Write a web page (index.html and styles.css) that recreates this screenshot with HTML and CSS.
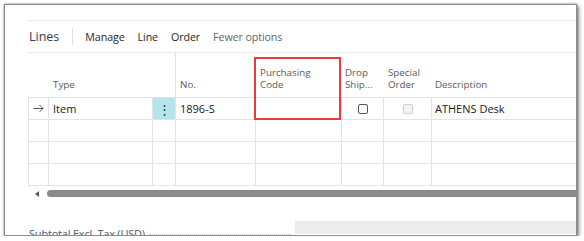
FILE: index.html
```html
<!DOCTYPE html>
<html>
<head>
<meta charset="utf-8">
<link rel="stylesheet" href="styles.css">
</head>
<body>
<div class="frame">
  <div class="toolbar">
    <span class="title">Lines</span>
    <span class="sep"></span>
    <span class="action">Manage</span>
    <span class="action">Line</span>
    <span class="action">Order</span>
    <span class="action muted">Fewer options</span>
  </div>
  <div class="grid">
    <div class="row head">
      <div class="c c1"></div>
      <div class="c c2"><span>Type</span></div>
      <div class="c c3"></div>
      <div class="c c4"><span>No.</span></div>
      <div class="c c5"><span>Purchasing<br>Code</span></div>
      <div class="c c6"><span>Drop<br>Ship...</span></div>
      <div class="c c7"><span>Special<br>Order</span></div>
      <div class="c c8"><span>Description</span></div>
    </div>
    <div class="row body">
      <div class="c c1 arrow"><svg width="11" height="9" viewBox="0 0 11 9"><path d="M0.5 4.5H10M6.5 1L10 4.5L6.5 8" fill="none" stroke="#555" stroke-width="1"/></svg></div>
      <div class="c c2">Item</div>
      <div class="c c3 sel">⋮</div>
      <div class="c c4">1896-S</div>
      <div class="c c5"></div>
      <div class="c c6 center"><span class="cb"></span></div>
      <div class="c c7 center"><span class="cb off"></span></div>
      <div class="c c8">ATHENS Desk</div>
    </div>
    <div class="row body">
      <div class="c c1"></div><div class="c c2"></div><div class="c c3"></div><div class="c c4"></div>
      <div class="c c5"></div><div class="c c6"></div><div class="c c7"></div><div class="c c8"></div>
    </div>
    <div class="row body">
      <div class="c c1"></div><div class="c c2"></div><div class="c c3"></div><div class="c c4"></div>
      <div class="c c5"></div><div class="c c6"></div><div class="c c7"></div><div class="c c8"></div>
    </div>
    <div class="row body">
      <div class="c c1"></div><div class="c c2"></div><div class="c c3"></div><div class="c c4"></div>
      <div class="c c5"></div><div class="c c6"></div><div class="c c7"></div><div class="c c8"></div>
    </div>
  </div>
  <div class="scroll">
    <span class="tri"></span>
    <span class="thumb"></span>
  </div>
  <div class="totals">
    <span class="label">Subtotal Excl. Tax (USD)</span>
    <span class="dots"></span>
    <span class="value"></span>
  </div>
  <div class="highlight"></div>
</div>
</body>
</html>
```

FILE: styles.css
```css
html, body {
  margin: 0;
  padding: 0;
  background: #ffffff;
}
body {
  font-family: "Open Sans", "Noto Sans", sans-serif;
  color: #212121;
}
.frame {
  position: relative;
  box-sizing: border-box;
  margin: 4px 0 0 4px;
  width: 573px;
  height: 232px;
  border: 1px solid #8d8d8d;
  box-shadow: 0 0 2px rgba(0,0,0,0.45), 2px 2px 4px rgba(0,0,0,0.45);
  background: #fff;
  overflow: hidden;
  padding: 15px 0 0 23px;
}
.toolbar {
  display: flex;
  align-items: center;
  height: 31px;
  border-top: 1px solid #e8e8e8;
  border-bottom: 1px solid #e8e8e8;
}
.title {
  font-size: 12.5px;
  color: #323e4f;
  margin-left: 1px;
}
.sep {
  width: 1px;
  height: 17px;
  background: #e0e0e0;
  margin: 0 12px 0 13px;
}
.action {
  font-size: 10.7px;
  letter-spacing: -0.1px;
  color: #262626;
  margin-right: 13px;
}
.muted {
  color: #5f6670;
}
.grid {
  width: 560px;
}
.row {
  display: flex;
}
.row.head {
  height: 45px;
  border-bottom: 1px solid #e3e3e3;
  box-sizing: border-box;
}
.row.body {
  height: 22px;
  border-left: 1px solid #e3e3e3;
  box-sizing: border-box;
}
.c {
  box-sizing: border-box;
  flex: none;
  font-size: 11px;
  display: flex;
  align-items: center;
  overflow: hidden;
  white-space: nowrap;
}
.body .c {
  border-right: 1px solid #e3e3e3;
  border-bottom: 1px solid #e3e3e3;
}
.head .c {
  align-items: flex-end;
  font-size: 9.8px;
  color: #5a5a5a;
  line-height: 12px;
  padding-bottom: 6px;
}
.head .c1 { width: 21px; }
.body .c1 { width: 20px; }
.c2 { width: 104px; padding-left: 4px; }
.c3 { width: 23px; }
.head .c3 { border-right: 1px solid #e3e3e3; }
.c4 { width: 80px; padding-left: 4px; }
.c5 { width: 86px; padding-left: 4px; }
.c6 { width: 42px; padding-left: 3px; }
.c7 { width: 48px; padding-left: 4px; }
.c8 { flex: 1 1 auto; padding-left: 3px; }
.arrow {
  justify-content: center;
}
.sel {
  background: #b4e5ea;
  justify-content: center;
  font-size: 13px;
  color: #333;
}
.center {
  justify-content: center;
}
.body .c6.center, .body .c7.center { padding-left: 0; }
.cb {
  width: 10px;
  height: 10px;
  box-sizing: border-box;
  border: 1px solid #555;
  border-radius: 2px;
  background: #fff;
}
.cb.off {
  border-color: #cfcfcf;
  background: #f4f4f4;
}
.scroll {
  display: flex;
  align-items: center;
  height: 7px;
  margin-top: 4px;
}
.tri {
  width: 0;
  height: 0;
  border-top: 3px solid transparent;
  border-bottom: 3px solid transparent;
  border-right: 4px solid #555;
  margin-left: 7px;
}
.thumb {
  flex: 1;
  height: 7px;
  background: #8a8a8a;
  border-radius: 4px 0 0 4px;
  margin-left: 8px;
}
.totals {
  display: flex;
  align-items: flex-end;
  margin-top: 24px;
  height: 14px;
}
.label {
  font-size: 11px;
  letter-spacing: -0.2px;
  color: #505a66;
  margin-left: 1px;
  line-height: 14px;
  position: relative;
  top: 6px;
}
.dots {
  flex: 1;
  border-bottom: 1px dotted #c8c8c8;
  margin: 0 4px 0 4px;
  height: 0;
}
.value {
  flex: none;
  width: 281px;
  height: 13px;
  background: #ececec;
  align-self: flex-start;
}
.highlight {
  position: absolute;
  left: 249px;
  top: 52px;
  width: 87px;
  height: 63px;
  border: 2px solid #ec3b3b;
  box-sizing: border-box;
}
```
